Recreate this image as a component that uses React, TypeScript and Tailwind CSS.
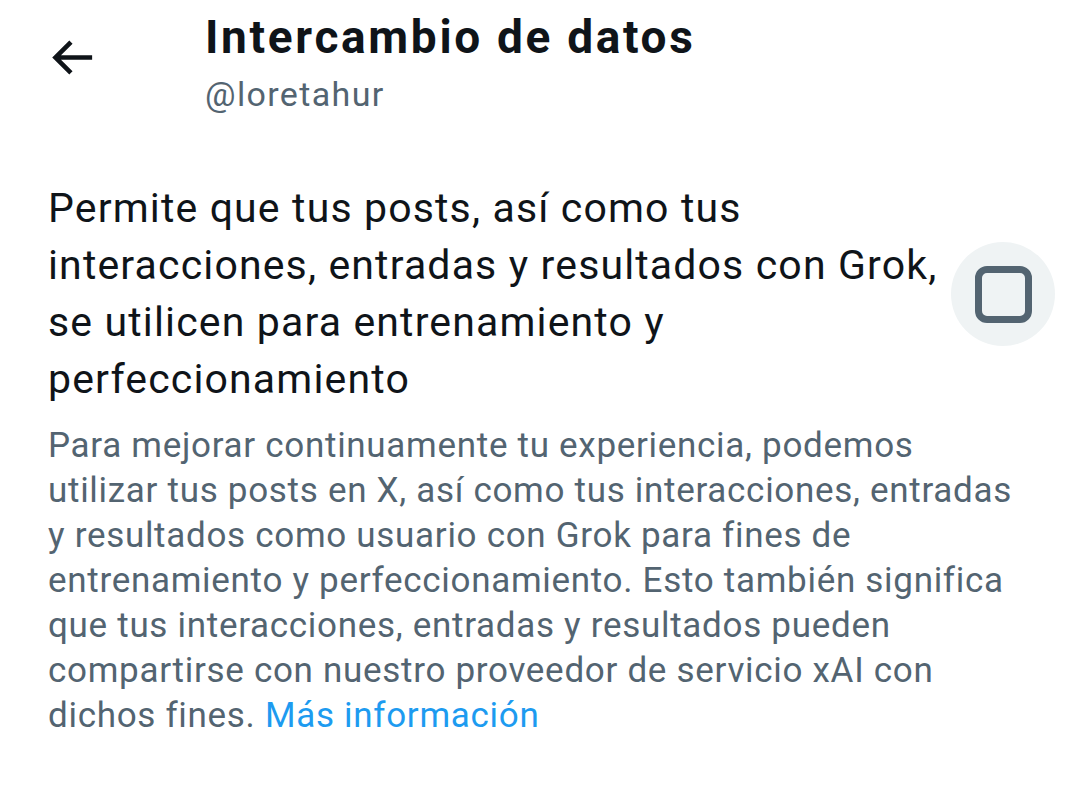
import React from 'react';

const BackArrow: React.FC = () => (
  <svg viewBox="0 0 24 24" className="w-[55px] h-[55px] text-[#0f1419]" fill="currentColor">
    <path d="M7.414 13l5.043 5.04-1.414 1.42L3.586 12l7.457-7.46 1.414 1.42L7.414 11H21v2H7.414z" />
  </svg>
);

const Checkbox: React.FC = () => (
  <div className="w-[104px] h-[104px] rounded-full bg-[#eff3f4] flex items-center justify-center shrink-0">
    <div className="w-[57px] h-[57px] rounded-[12px] border-[7px] border-[#536471]" />
  </div>
);

const App: React.FC = () => {
  return (
    <div className="w-[1080px] h-[785px] bg-white overflow-hidden" style={{ fontFamily: 'Roboto, "Noto Sans", sans-serif' }}>
      <header className="flex items-start pt-[10px]">
        <div className="w-[205px] pl-[44px] pt-[20px]">
          <BackArrow />
        </div>
        <div>
          <h1 className="text-[46px] leading-[54px] font-bold tracking-[0.058em] text-[#0f1419]">Intercambio de datos</h1>
          <p className="text-[34px] leading-[40px] tracking-[0.04em] text-[#536471] mt-[10px]">@loretahur</p>
        </div>
      </header>

      <section className="pl-[48px] pr-[25px] pt-[66px]">
        <div className="flex items-center justify-between">
          <p className="text-[41px] leading-[57px] tracking-[0.028em] text-[#0f1419] whitespace-nowrap">
            Permite que tus posts, así como tus
            <br />
            interacciones, entradas y resultados con Grok,
            <br />
            se utilicen para entrenamiento y
            <br />
            perfeccionamiento
          </p>
          <Checkbox />
        </div>
        <p className="text-[35px] leading-[45px] tracking-[0.02em] text-[#536471] mt-[15px] whitespace-nowrap">
          Para mejorar continuamente tu experiencia, podemos
          <br />
          utilizar tus posts en X, así como tus interacciones, entradas
          <br />
          y resultados como usuario con Grok para fines de
          <br />
          entrenamiento y perfeccionamiento. Esto también significa
          <br />
          que tus interacciones, entradas y resultados pueden
          <br />
          compartirse con nuestro proveedor de servicio xAI con
          <br />
          dichos fines. <a className="text-[#1d9bf0]">Más información</a>
        </p>
      </section>
    </div>
  );
};

export default App;
